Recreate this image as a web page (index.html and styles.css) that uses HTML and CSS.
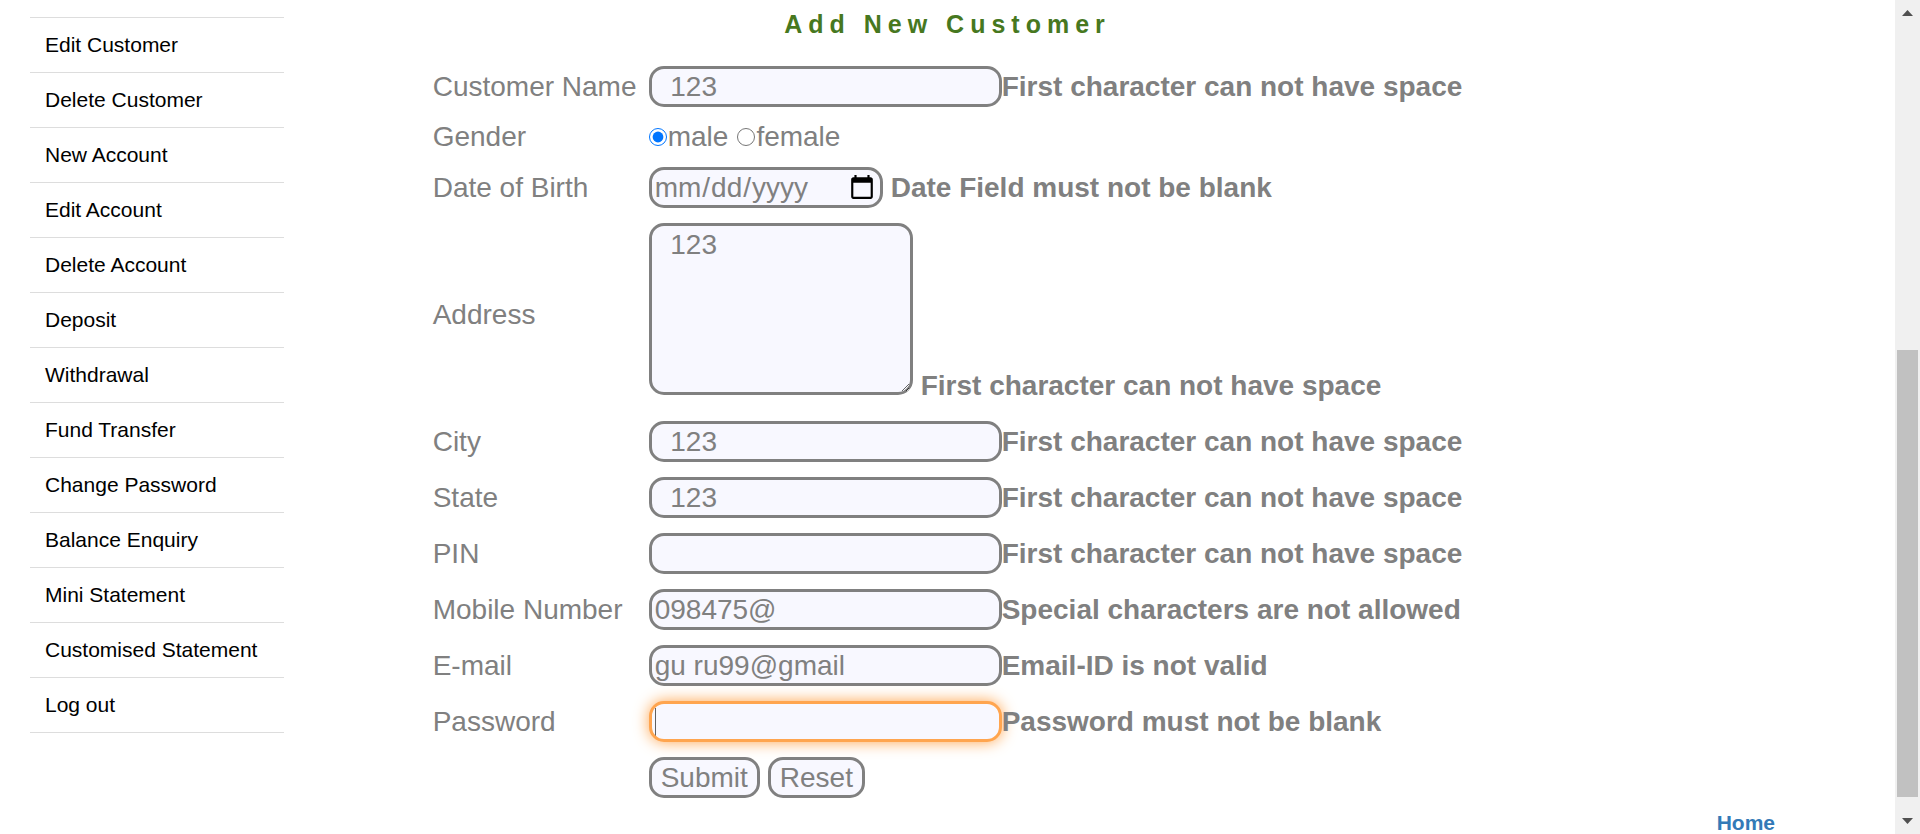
FILE: index.html
```html
<!DOCTYPE html>
<html lang="en">
<head>
<meta charset="utf-8">
<title>Add New Customer</title>
<link rel="stylesheet" href="styles.css">
</head>
<body>
<div class="page">
  <div class="content">
    <nav class="menu">
      <a href="#">Edit Customer</a>
      <a href="#">Delete Customer</a>
      <a href="#">New Account</a>
      <a href="#">Edit Account</a>
      <a href="#">Delete Account</a>
      <a href="#">Deposit</a>
      <a href="#">Withdrawal</a>
      <a href="#">Fund Transfer</a>
      <a href="#">Change Password</a>
      <a href="#">Balance Enquiry</a>
      <a href="#">Mini Statement</a>
      <a href="#">Customised Statement</a>
      <a href="#">Log out</a>
    </nav>
    <main>
      <h1 class="title">Add New Customer</h1>
      <form class="form">
        <label for="name">Customer Name</label>
        <div class="field"><input class="box" id="name" type="text" value="  123"><span class="error">First character can not have space</span></div>

        <span class="choices" id="gender">Gender</span>
        <div class="choices" role="radiogroup" aria-labelledby="gender">
          <label class="choice"><input class="radio" type="radio" name="gender" checked>male</label>
          <label class="choice"><input class="radio" type="radio" name="gender">female</label>
        </div>

        <label for="dob">Date of Birth</label>
        <div class="field spaced"><input class="box date" id="dob" type="date"><span class="error">Date Field must not be blank</span></div>

        <label for="address">Address</label>
        <div class="field spaced tall"><textarea class="box area" id="address">  123</textarea><span class="error">First character can not have space</span></div>

        <label for="city">City</label>
        <div class="field"><input class="box" id="city" type="text" value="  123"><span class="error">First character can not have space</span></div>

        <label for="state">State</label>
        <div class="field"><input class="box" id="state" type="text" value="  123"><span class="error">First character can not have space</span></div>

        <label for="pin">PIN</label>
        <div class="field"><input class="box" id="pin" type="text"><span class="error">First character can not have space</span></div>

        <label for="mobile">Mobile Number</label>
        <div class="field"><input class="box" id="mobile" type="text" value="098475@"><span class="error">Special characters are not allowed</span></div>

        <label for="email">E-mail</label>
        <div class="field"><input class="box" id="email" type="text" value="gu ru99@gmail"><span class="error">Email-ID is not valid</span></div>

        <label for="password">Password</label>
        <div class="field"><input class="box active" id="password" type="password"><span class="error">Password must not be blank</span></div>

        <div class="field spaced actions">
          <button class="box button" type="button">Submit</button>
          <button class="box button" type="reset">Reset</button>
        </div>
      </form>
    </main>
    <footer class="footer"><a href="#">Home</a></footer>
  </div>
  <div class="scrollbar" aria-hidden="true">
    <svg width="11" height="6" viewBox="0 0 11 6"><path d="M0 6L5.500 0L11 6Z" fill="#505050"/></svg>
    <div class="track"><div class="thumb"></div></div>
    <svg width="11" height="6" viewBox="0 0 11 6"><path d="M0 0L5.500 6L11 0Z" fill="#505050"/></svg>
  </div>
</div>
</body>
</html>
```

FILE: styles.css
```css
* {
  box-sizing: border-box;
}

body {
  margin: 0;
  background: #fff;
  color: #808080;
  font-family: "Liberation Sans", Arial, sans-serif;
  font-size: 28px;
  line-height: 32px;
}

.page {
  display: flex;
  height: 100vh;
  overflow: hidden;
}

.content {
  flex: 1;
  display: grid;
  grid-template-columns: 1fr auto 1fr;
  align-content: start;
  row-gap: 14px;
}

.menu {
  width: 254px;
  margin: 17px 0 0 30px;
  border-top: 1px solid #ddd;
  font-size: 21px;
  line-height: 30px;
}

.menu a {
  display: block;
  padding: 12px 15px;
  border-bottom: 1px solid #ddd;
  color: #000;
  text-decoration: none;
}

.title {
  margin: 8px 0 26px;
  color: #47781f;
  font-size: 25px;
  letter-spacing: 6px;
  text-align: center;
}

.form {
  display: grid;
  grid-template-columns: 216px auto;
  align-items: center;
  row-gap: 15px;
}

.field {
  display: flex;
  align-items: center;
}

.spaced {
  gap: 8px;
}

.choices {
  display: flex;
  gap: 9px;
  line-height: 30px;
}

.choice {
  display: flex;
  align-items: center;
}

.radio {
  width: 18px;
  height: 18px;
  margin: 0 1px 0 0;
}

.box {
  width: 353px;
  height: 41px;
  margin: 0;
  padding: 1px 3px;
  border: 3px solid #808080;
  border-radius: 15px;
  outline: none;
  background-color: #f8f8ff;
  color: #808080;
  font: inherit;
}

.date {
  width: 234px;
  padding: 1px 2px;
}

.tall {
  height: 183px;
  align-items: flex-end;
}

.area {
  width: 264px;
  height: 172px;
  align-self: flex-start;
  padding: 3px;
}

.tall .error {
  padding-bottom: 4px;
}

.active {
  border-color: #ffa54f;
  box-shadow: 0 0 15px #ffa54f;
  background-image: linear-gradient(#606060, #606060);
  background-position: 3px center;
  background-repeat: no-repeat;
  background-size: 1px 28px;
}

.error {
  font-weight: bold;
  white-space: nowrap;
}

.actions {
  grid-column: 2;
}

.button {
  width: auto;
  padding: 1px 9px;
}

.footer {
  grid-column: 1 / -1;
  padding-right: 120px;
  font-size: 21px;
  font-weight: bold;
  line-height: 22px;
  text-align: right;
}

.footer a {
  color: #337ab7;
  text-decoration: none;
}

.scrollbar {
  display: flex;
  flex-direction: column;
  align-items: center;
  gap: 10px;
  width: 25px;
  padding: 10px 2px;
  background: #f0f0f0;
}

.track {
  flex: 1;
  display: flex;
  flex-direction: column;
  justify-content: flex-end;
  align-self: stretch;
  padding-bottom: 11px;
}

.thumb {
  height: 58%;
  background: #c1c1c1;
}
```
